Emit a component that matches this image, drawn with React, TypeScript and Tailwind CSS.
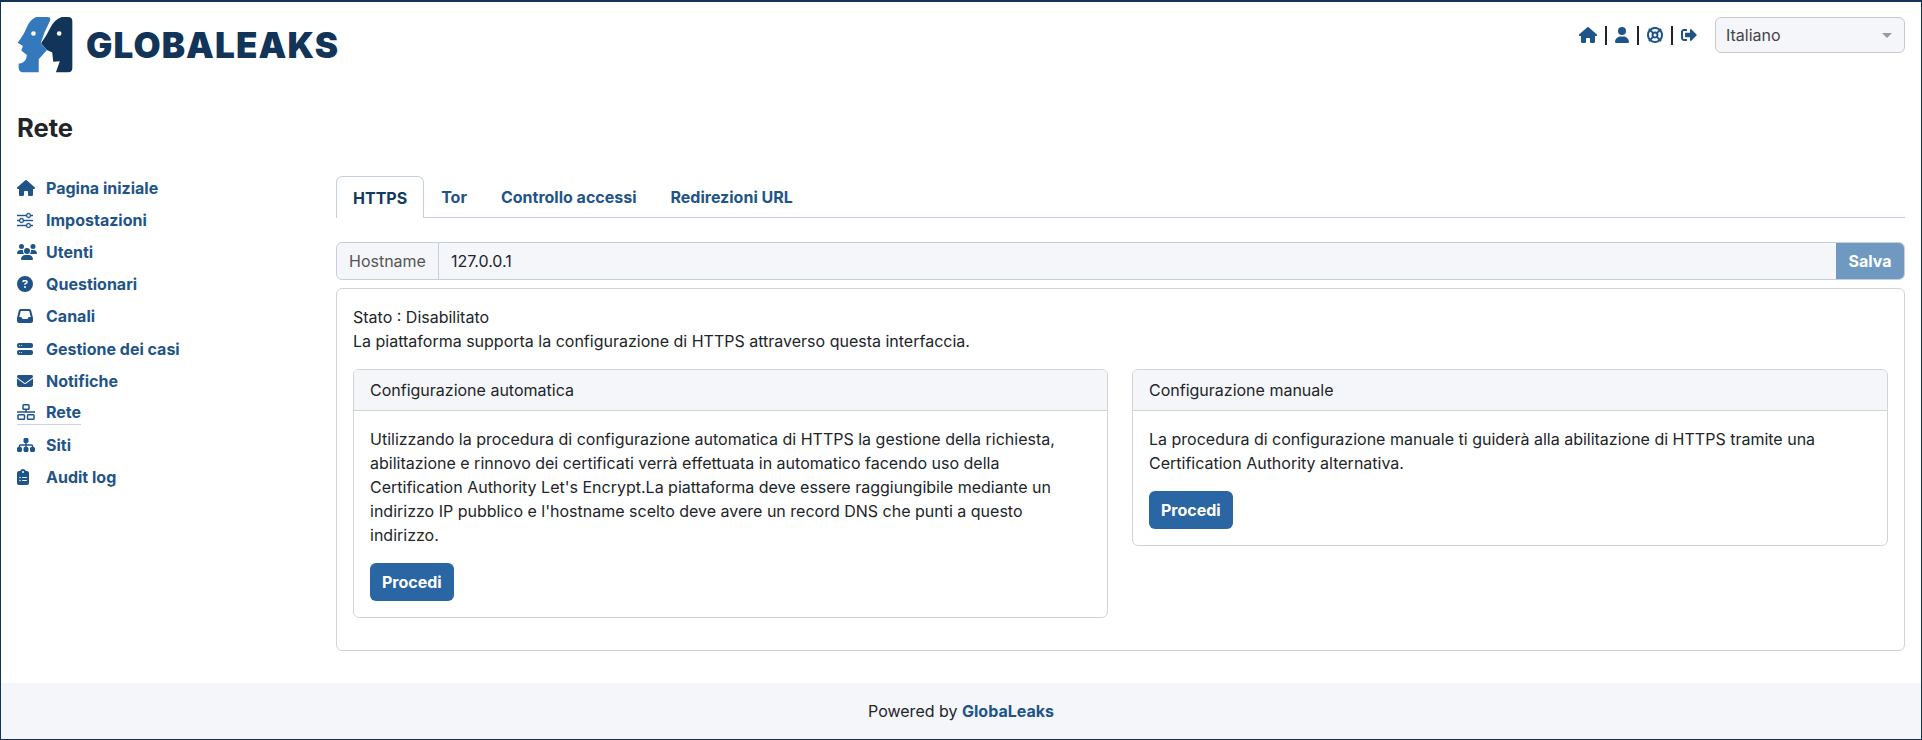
import React from 'react'
import { BsSliders, BsHddStackFill } from 'react-icons/bs'
import { FaSignOutAlt } from 'react-icons/fa'
import {
  FaHouse,
  FaUsers,
  FaCircleQuestion,
  FaInbox,
  FaEnvelope,
  FaSitemap,
  FaClipboardList,
  FaUser,
  FaLifeRing,
} from 'react-icons/fa6'

const ReteIcon = ({ className }: { className?: string }) => (
  <svg viewBox="0 0 18 16" fill="none" stroke="currentColor" strokeWidth="1.5" className={className}>
    <rect x="6" y="0.75" width="6" height="4.5" rx="0.8" />
    <path d="M9 5.5V8M0 8H18" />
    <rect x="1" y="10.75" width="6.5" height="4.5" rx="0.8" />
    <rect x="10.5" y="10.75" width="6.5" height="4.5" rx="0.8" />
  </svg>
)

const nav = [
  { label: 'Pagina iniziale', icon: FaHouse, size: 'w-[18px] h-[16px]' },
  { label: 'Impostazioni', icon: BsSliders, size: 'w-[16px] h-[16px] stroke-[0.4px]' },
  { label: 'Utenti', icon: FaUsers, size: 'w-[20px] h-[16px]' },
  { label: 'Questionari', icon: FaCircleQuestion, size: 'w-[16px] h-[16px]' },
  { label: 'Canali', icon: FaInbox, size: 'w-[16px] h-[16px]' },
  { label: 'Gestione dei casi', icon: BsHddStackFill, size: 'w-[16px] h-[16px]' },
  { label: 'Notifiche', icon: FaEnvelope, size: 'w-[16px] h-[16px]' },
  { label: 'Rete', icon: ReteIcon, size: 'w-[18px] h-[16px]', active: true },
  { label: 'Siti', icon: FaSitemap, size: 'w-[18px] h-[16px]' },
  { label: 'Audit log', icon: FaClipboardList, size: 'w-[12px] h-[16px]' },
]

const tabs = ['Tor', 'Controllo accessi', 'Redirezioni URL']

const Logo = () => (
  <svg viewBox="50 50 170 170" className="w-[56px] h-[56px] shrink-0">
    <path
      d="M108 50H142Q155 50 150 62Q132 95 122 130L141 150L116 178V218H72Q55 218 55 203V192Q78 190 80 165L63 152L68 138L52 128Q70 105 78 85Q88 58 108 50Z"
      fill="#3579bd"
    />
    <path
      d="M186 50H205Q218 50 218 63V205Q218 218 205 218H168L180 184L160 186L157 158L141 150L123 130Q138 110 150 85Q162 58 186 50Z"
      fill="#113458"
    />
    <circle cx="100" cy="100" r="7" fill="#fff" />
    <circle cx="178" cy="100" r="7" fill="#fff" />
  </svg>
)

const Card = ({ title, className, children }: { title: string; className: string; children: React.ReactNode }) => (
  <div className={`self-start border border-[#d3d3d3] rounded-md overflow-hidden ${className}`}>
    <div className="h-[41px] px-4 flex items-center bg-[#f5f6fa] border-b border-[#d3d3d3]">{title}</div>
    <div className="p-4">
      <p className="mb-4">{children}</p>
      <button className="h-[38px] px-3 rounded-md bg-[#2a66a3] text-white font-bold">Procedi</button>
    </div>
  </div>
)

export default function App() {
  return (
    <div className="h-[740px] flex flex-col border border-t-2 border-[#113458] bg-white text-[16px] leading-[24px] text-[#212529] font-['Inter',sans-serif] overflow-hidden">
      <header className="flex justify-between pl-4 pr-4 pt-[15px]">
        <div className="flex items-center gap-[13px]">
          <Logo />
          <span className="text-[35px] leading-none font-black tracking-[1.1px] text-[#113458]">GLOBALEAKS</span>
        </div>
        <div className="flex items-start gap-[18px]">
          <div className="flex items-center h-[36px] gap-[8px] text-[#1f5488]">
            <FaHouse className="w-[18px] h-[16px]" />
            <span className="w-[2px] h-[19px] bg-[#212529]" />
            <FaUser className="w-[14px] h-[16px]" />
            <span className="w-[2px] h-[19px] bg-[#212529]" />
            <FaLifeRing className="w-[16px] h-[16px]" />
            <span className="w-[2px] h-[19px] bg-[#212529]" />
            <FaSignOutAlt className="w-[16px] h-[16px]" />
          </div>
          <div className="w-[190px] h-[36px] px-[10px] flex items-center justify-between rounded-md border border-[#c9c9c9] bg-[#f5f6fa] text-[#444]">
            Italiano
            <span className="mr-[2px] border-x-[5px] border-x-transparent border-t-[5px] border-t-[#999]" />
          </div>
        </div>
      </header>

      <h1 className="pl-4 mt-[37px] text-[25.6px] leading-[36px] font-bold text-[#212529]">Rete</h1>

      <main className="flex flex-1 px-4 mt-[30px]">
        <nav className="w-[319px] shrink-0 flex flex-col gap-[8px]">
          {nav.map((item) => (
            <a key={item.label} className="h-[24.1px] flex items-center font-bold text-[#1f5488]">
              <span className={`flex items-center ${item.active ? 'border-b border-[#ccd3e2]' : ''}`}>
                <span className="w-[29px] flex items-center">
                  <item.icon className={item.size} />
                </span>
                {item.label}
              </span>
            </a>
          ))}
        </nav>

        <section className="flex-1 min-w-0">
          <div className="flex h-[42px] border-b border-[#c5d0de] font-bold text-[#1f5488]">
            <div className="h-[42px] px-4 flex items-center rounded-t-md border border-b-0 border-[#c5d0de] bg-white text-[#123a5e]">
              HTTPS
            </div>
            {tabs.map((t) => (
              <div key={t} className="px-4 flex items-center border-x border-transparent">
                {t}
              </div>
            ))}
          </div>

          <div className="mt-6 h-[38px] flex rounded-md border border-[#c5d0de] bg-[#f5f6fa] overflow-hidden">
            <div className="px-3 flex items-center border-r border-[#c5d0de] text-[#555]">Hostname</div>
            <div className="flex-1 px-3 flex items-center">127.0.0.1</div>
            <div className="w-[68px] flex items-center justify-center bg-[#7099c1] text-white font-bold">Salva</div>
          </div>

          <div className="mt-2 h-[363px] p-4 rounded-md border border-[#d3d3d3]">
            <div>Stato : Disabilitato</div>
            <div>La piattaforma supporta la configurazione di HTTPS attraverso questa interfaccia.</div>
            <div className="flex gap-6 mt-4">
              <Card title="Configurazione automatica" className="w-[755px] shrink-0">
                Utilizzando la procedura di configurazione automatica di HTTPS la gestione della richiesta, abilitazione e rinnovo dei certificati verrà effettuata in automatico facendo uso della Certification Authority Let's Encrypt.La piattaforma deve essere raggiungibile mediante un indirizzo IP pubblico e l'hostname scelto deve avere un record DNS che punti a questo indirizzo.
              </Card>
              <Card title="Configurazione manuale" className="flex-1">
                La procedura di configurazione manuale ti guiderà alla abilitazione di HTTPS tramite una Certification Authority alternativa.
              </Card>
            </div>
          </div>
        </section>
      </main>

      <footer className="h-[56px] shrink-0 flex items-center justify-center bg-[#f5f6fa]">
        <span>
          Powered by <a className="font-bold text-[#1f5488]">GlobaLeaks</a>
        </span>
      </footer>
    </div>
  )
}
